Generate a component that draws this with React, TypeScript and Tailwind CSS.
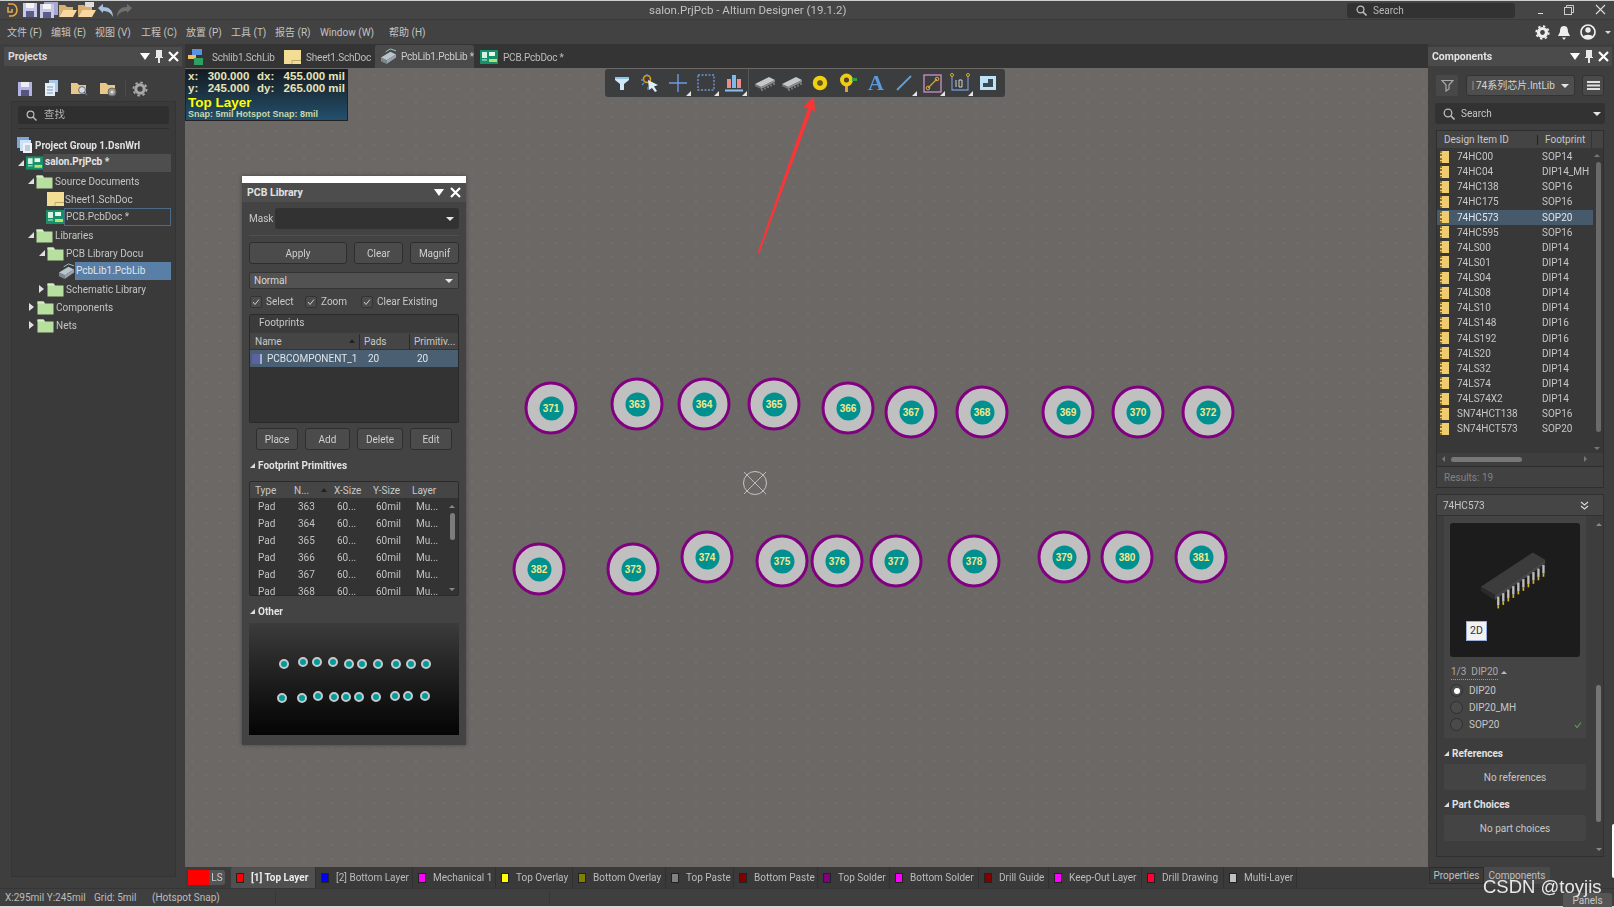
import React from "react";

const Folder = () => (
  <svg width="17" height="16" viewBox="0 0 17 16" className="shrink-0">
    <path d="M0.5 2.5 h6 l1.5 2 h8.5 v11 h-16z" fill="#b7e0a0" />
    <path d="M0.5 2.5 h6 l1.5 2 h-7.5z" fill="#d6f0c4" />
  </svg>
);
const YDoc = ({ w = 17 }: { w?: number }) => (
  <svg width={w} height="14" viewBox="0 0 17 14" className="shrink-0">
    <rect width="17" height="14" fill="#f3dc94" />
    <path d="M8 10.5h9M8 10.5v3.5" stroke="#b9a86e" strokeWidth="1" fill="none" />
  </svg>
);
const Pcb = ({ w = 18 }: { w?: number }) => (
  <svg width={w} height="14" viewBox="0 0 18 14" className="shrink-0">
    <rect width="18" height="14" fill="#14906a" />
    <rect x="2" y="2" width="5" height="6" fill="#d8f0e0" />
    <rect x="9" y="2" width="6" height="4" fill="#e8f6ee" />
    <rect x="9" y="9" width="8" height="3" fill="#b8e070" />
    <path d="M2 10h5" stroke="#d8f0e0" />
  </svg>
);
const LibIc = ({ s = 18 }: { s?: number }) => (
  <svg width={s} height={s} viewBox="0 0 18 18" className="shrink-0">
    <path d="M1 10 L11 4 L17 7 L7 13z" fill="#b9c4cc" />
    <path d="M1 10 L7 13 v4 L1 14z" fill="#7b8790" />
    <path d="M7 13 L17 7 v3 L7 17z" fill="#98a3ab" />
    <path d="M6 4 L11 1 L17 3" stroke="#9cc" fill="none" />
  </svg>
);
const Tri = ({ open }: { open?: boolean }) =>
  open ? (
    <svg width="6" height="6" viewBox="0 0 6 6" className="shrink-0">
      <path d="M6 0 V6 H0z" fill="#e0e0e0" />
    </svg>
  ) : (
    <svg width="5" height="8" viewBox="0 0 5 8" className="shrink-0">
      <path d="M0 0 L5 4 L0 8z" fill="#e0e0e0" />
    </svg>
  );
const Chip = () => (
  <svg width="22" height="18" viewBox="0 0 22 18">
    <path d="M1 10 L15 3 L21 6 L7 13z" fill="#c5c7c8" />
    <path d="M1 10 L7 13 v2 L1 12z" fill="#777" />
    <path d="M7 13 L21 6 v2 L7 15z" fill="#8d8f90" />
    <path d="M8 15v2M11 13.5v2M14 12v2M17 10.5v2M20 9v2" stroke="#999" strokeWidth="1.2" />
  </svg>
);
const Corner = () => (
  <span className="absolute right-[1px] bottom-[1px] w-0 h-0 border-l-[5px] border-l-transparent border-b-[5px] border-b-[#e4e4e4]" />
);

const toolIcons: React.ReactNode[] = [
  <svg width="18" height="18" viewBox="0 0 18 18"><path d="M2 3 H16 V6 L11 10 V16 H7 V10 L2 6z" fill="#cfe8f6" /><path d="M2 3H16V5H2z" fill="#8fc4e4" /></svg>,
  <svg width="20" height="20" viewBox="0 0 20 20"><circle cx="7" cy="6" r="3.5" fill="none" stroke="#e0a020" strokeWidth="1.6" /><path d="M1 7h3M7 1v2M2 12l2-2M8 14v3" stroke="#5a90d0" strokeWidth="1.3" /><path d="M8 7 L18 12 L14 13.5 L17 18 L15 19 L12 15 L9 17z" fill="#dceefa" /></svg>,
  <svg width="20" height="20" viewBox="0 0 20 20"><path d="M10 1V19M1 10H19" stroke="#6f9ae0" strokeWidth="1.4" /></svg>,
  <svg width="20" height="20" viewBox="0 0 20 20"><rect x="2" y="2" width="16" height="15" fill="none" stroke="#6f94d8" strokeWidth="1.4" strokeDasharray="2 1.5" /></svg>,
  <svg width="20" height="20" viewBox="0 0 20 20"><rect x="3" y="6" width="4" height="9" fill="#e88c8c" /><rect x="8" y="2" width="4" height="13" fill="#80b8e8" /><rect x="13" y="6" width="4" height="9" fill="#e88c8c" /><path d="M1 17.5H19" stroke="#8cc0ee" strokeWidth="2" /></svg>,
  <Chip />,
  <Chip />,
  <svg width="16" height="16" viewBox="0 0 16 16"><circle cx="8" cy="8" r="5" fill="none" stroke="#f0d010" strokeWidth="4.5" /><circle cx="8" cy="8" r="2.2" fill="#6a5a20" /></svg>,
  <svg width="20" height="20" viewBox="0 0 20 20"><rect x="7" y="11" width="3" height="8" fill="#e09a40" /><circle cx="8.5" cy="7" r="4.5" fill="none" stroke="#f0cc10" strokeWidth="4" /><circle cx="8.5" cy="7" r="1.5" fill="#5a4a20" /><rect x="14" y="5" width="5" height="3" fill="#30a040" /></svg>,
  <span className="font-['Liberation_Serif',serif] font-bold text-[22px] leading-none text-[#5b9bdc]">A</span>,
  <svg width="18" height="18" viewBox="0 0 18 18"><path d="M2 16 L16 2" stroke="#5f9fe0" strokeWidth="1.8" /></svg>,
  <svg width="19" height="19" viewBox="0 0 19 19"><rect x="1" y="1" width="17" height="17" fill="none" stroke="#d090c8" strokeWidth="1.3" /><path d="M5 14 L14 5" stroke="#d8a030" strokeWidth="1.2" /><circle cx="5" cy="14" r="1.8" fill="none" stroke="#e0a830" /><circle cx="14" cy="5" r="1.8" fill="none" stroke="#e0a830" /></svg>,
  <svg width="20" height="20" viewBox="0 0 20 20"><path d="M2 3V17H18V3" fill="none" stroke="#6c90c8" strokeWidth="1.3" /><circle cx="2" cy="2" r="1.5" fill="none" stroke="#e0a830" /><circle cx="18" cy="2" r="1.5" fill="none" stroke="#e0a830" /><path d="M6 7V14M9 7h3v7h-3z" stroke="#d0d4d8" fill="none" /></svg>,
  <svg width="18" height="18" viewBox="0 0 18 18"><rect x="1" y="2" width="16" height="14" fill="#bfe2f6" /><path d="M4 13 V9 H9 V5 H14 V13z" fill="#3a4a58" /></svg>,
];

const titleIcons: React.ReactNode[] = [
  <svg width="16" height="16" viewBox="0 0 16 16"><path d="M5 2 H9 A5 6 0 0 1 9 14 H6 M5 5 V10 H9 V7" fill="none" stroke="#e0a848" strokeWidth="1.6" /></svg>,
  <svg width="16" height="16" viewBox="0 0 16 16"><rect x="1" y="1" width="14" height="14" fill="#c8c8e8" /><rect x="4" y="1" width="8" height="5" fill="#f4f4f4" /><rect x="4" y="9" width="8" height="6" fill="#5c5c88" /></svg>,
  <svg width="18" height="16" viewBox="0 0 18 16"><rect x="4" y="0" width="14" height="13" fill="#a8a8d0" /><rect x="0" y="2" width="14" height="14" fill="#c8c8e8" /><rect x="3" y="2" width="8" height="5" fill="#f4f4f4" /><rect x="3" y="10" width="8" height="6" fill="#5c5c88" /></svg>,
  <svg width="18" height="16" viewBox="0 0 18 16"><path d="M0 3h6l2 2h6v3H4L0 15z" fill="#d8b070" /><path d="M4 8H18L14 15H0z" fill="#f8d8a0" /></svg>,
  <svg width="18" height="16" viewBox="0 0 18 16"><rect x="7" y="0" width="9" height="5" fill="#ddd" /><path d="M0 3h6l2 2h6v3H4L0 15z" fill="#d8b070" /><path d="M4 8H18L14 15H0z" fill="#f8d8a0" /></svg>,
  <svg width="17" height="15" viewBox="0 0 17 15"><path d="M1 5 L6 1 V4 C12 4 16 7 16 14 C14 10 11 8 6 8 V10z" fill="#a8c0e0" /></svg>,
  <svg width="17" height="15" viewBox="0 0 17 15"><path d="M16 5 L11 1 V4 C5 4 1 7 1 14 C3 10 6 8 11 8 V10z" fill="#707070" /></svg>,
];

const pads: [number, number, number][] = [
  [371, 551, 408], [363, 637, 404], [364, 704, 404], [365, 774, 404], [366, 848, 408], [367, 911, 412], [368, 982, 412],
  [369, 1068, 412], [370, 1138, 412], [372, 1208, 412], [382, 539, 569], [373, 633, 569], [374, 707, 557], [375, 782, 561],
  [376, 837, 561], [377, 896, 561], [378, 974, 561], [379, 1064, 557], [380, 1127, 557], [381, 1201, 557],
];

const previewDots: [number, number][] = [
  [163, 641], [220, 637], [262, 637], [308, 637], [357, 641], [397, 643], [443, 642], [498, 642], [543, 642], [589, 642],
  [156, 745], [217, 745], [265, 737], [313, 740], [348, 740], [387, 740], [437, 740], [494, 737], [535, 737], [584, 737],
];

const layers: [string, string, string, string?][] = [
  ["[1] Top Layer", "#ff0000", "w-[85px]", "active"],
  ["[2] Bottom Layer", "#0000ff", "w-[97px]"],
  ["Mechanical 1", "#ff00ff", "w-[83px]"],
  ["Top Overlay", "#ffff00", "w-[77px]"],
  ["Bottom Overlay", "#808000", "w-[93px]"],
  ["Top Paste", "#808080", "w-[68px]"],
  ["Bottom Paste", "#800000", "w-[84px]"],
  ["Top Solder", "#800080", "w-[72px]"],
  ["Bottom Solder", "#ff00ff", "w-[89px]"],
  ["Drill Guide", "#800000", "w-[70px]"],
  ["Keep-Out Layer", "#ff00ff", "w-[93px]"],
  ["Drill Drawing", "#ff0030", "w-[82px]"],
  ["Multi-Layer", "#c0c0c0", "w-[73px]"],
];

const comps: [string, string][] = [
  ["74HC00", "SOP14"], ["74HC04", "DIP14_MH"], ["74HC138", "SOP16"], ["74HC175", "SOP16"], ["74HC573", "SOP20"], ["74HC595", "SOP16"],
  ["74LS00", "DIP14"], ["74LS01", "DIP14"], ["74LS04", "DIP14"], ["74LS08", "DIP14"], ["74LS10", "DIP14"], ["74LS148", "DIP16"],
  ["74LS192", "DIP16"], ["74LS20", "DIP14"], ["74LS32", "DIP14"], ["74LS74", "DIP14"], ["74LS74X2", "DIP14"], ["SN74HCT138", "SOP16"],
  ["SN74HCT573", "SOP20"],
];

const PanelBtn = ({ children, cls }: { children: React.ReactNode; cls: string }) => (
  <div className={`h-[22px] flex items-center justify-center rounded-[3px] bg-[#4b4b4b] border border-[#2e2e2e] text-[#cfcfcf] overflow-hidden ${cls}`}>{children}</div>
);
const Caret = () => <span className="w-0 h-0 shrink-0 border-l-[4px] border-r-[4px] border-t-[4px] border-l-transparent border-r-transparent border-t-[#e6e6e6]" />;
const Check = () => (
  <span className="w-[12px] h-[12px] rounded-[2px] bg-[#4b4b4b] border border-[#333] flex items-center justify-center shrink-0">
    <svg width="8" height="8" viewBox="0 0 8 8"><path d="M1 4 L3 6.5 L7 1.5" fill="none" stroke="#d0d0d0" strokeWidth="1" /></svg>
  </span>
);
const PanelHead = () => (
  <div className="flex items-center gap-[3px]">
    <span className="w-0 h-0 border-l-[5px] border-r-[5px] border-t-[7px] border-l-transparent border-r-transparent border-t-white" />
    <svg width="12" height="13" viewBox="0 0 12 13"><path d="M3 0h6v7h1v1H7v5H5V8H2V7h1z" fill="#e8e8e8" /></svg>
    <svg width="11" height="11" viewBox="0 0 11 11"><path d="M1 1 L10 10 M10 1 L1 10" stroke="#fff" strokeWidth="2.2" /></svg>
  </div>
);
const Heading = ({ children, cls }: { children: React.ReactNode; cls: string }) => (
  <div className={`flex items-center gap-[3px] font-bold text-[#e2e2e2] text-[10px] ${cls}`}>
    <svg width="5" height="5" viewBox="0 0 5 5"><path d="M5 0V5H0z" fill="#ddd" /></svg>
    {children}
  </div>
);

const Tree = () => (
  <div className="mt-[7px] text-[10px] text-[#c4c4c4] relative">
    <div className="h-[18px] flex items-center pl-[7px] gap-[1px]">
      <svg width="18" height="18" viewBox="0 0 18 18" className="shrink-0"><rect x="1" y="1" width="12" height="11" fill="#7aa6e0" /><rect x="4" y="4" width="11" height="11" fill="#cfe0f2" /><rect x="7" y="7" width="9" height="10" fill="#f0f4f8" /><path d="M9 10h5M9 12h5M9 14h5" stroke="#8fa8c0" /></svg>
      <span className="font-bold text-[#e0e0e0]">Project Group 1.DsnWrl</span>
    </div>
    <div className="h-[18px] flex items-center pl-[9px] relative">
      <Tri open />
      <span className="ml-[2px]"><Pcb w={17} /></span>
      <span className="font-bold text-[#e4e4e4] bg-[#4e4e4e] h-[18px] leading-[16px] w-[128px] pl-[2px]">salon.PrjPcb *</span>
    </div>
    <div className="h-[18px] flex items-center pl-[19px] gap-[1px]"><span className="mr-[1px]"><Tri open /></span><Folder /><span className="ml-[1px]">Source Documents</span></div>
    <div className="h-[18px] flex items-center pl-[38px]"><YDoc /><span className="ml-[1px]">Sheet1.SchDoc</span></div>
    <div className="h-[18px] flex items-center pl-[37px]"><Pcb /><span className="border border-[#4a6a88] h-[18px] w-[107px] pl-[1px] leading-[15px]">PCB.PcbDoc *</span></div>
    <div className="h-[18px] flex items-center pl-[19px] gap-[1px]"><span className="mr-[1px]"><Tri open /></span><Folder /><span className="ml-[1px]">Libraries</span></div>
    <div className="h-[18px] flex items-center pl-[30px] gap-[1px]"><span className="mr-[1px]"><Tri open /></span><Folder /><span className="ml-[1px]">PCB Library Docu</span></div>
    <div className="h-[18px] flex items-center pl-[49px]"><LibIc s={17} /><span className="bg-[#5a7fa6] h-[18px] w-[96px] pl-[1px] leading-[17px] text-[#dfe6ee]">PcbLib1.PcbLib</span></div>
    <div className="h-[18px] flex items-center pl-[30px] gap-[1px]"><span className="mr-[2px]"><Tri /></span><Folder /><span className="ml-[1px]">Schematic Library</span></div>
    <div className="h-[18px] flex items-center pl-[20px] gap-[1px]"><span className="mr-[2px]"><Tri /></span><Folder /><span className="ml-[1px]">Components</span></div>
    <div className="h-[18px] flex items-center pl-[20px] gap-[1px]"><span className="mr-[2px]"><Tri /></span><Folder /><span className="ml-[1px]">Nets</span></div>
  </div>
);

const LibraryPanel = () => (
  <div className="absolute left-[57px] top-[108px] w-[224px] h-[569px] bg-[#434343] flex flex-col text-[10px] text-[#c8c8c8] shadow-[0_0_4px_rgba(0,0,0,0.35)]">
    <div className="h-[7px] bg-white shrink-0" />
    <div className="h-[19px] bg-[#4d4d4d] flex items-center justify-between pl-[5px] pr-[5px] shrink-0">
      <span className="font-bold text-[#e0e0e0] text-[10.5px]">PCB Library</span>
      <div className="flex items-center gap-[6px]">
        <span className="w-0 h-0 border-l-[5px] border-r-[5px] border-t-[7px] border-l-transparent border-r-transparent border-t-white" />
        <svg width="11" height="11" viewBox="0 0 11 11"><path d="M1 1 L10 10 M10 1 L1 10" stroke="#fff" strokeWidth="2.2" /></svg>
      </div>
    </div>
    <div className="mt-[6px] px-[7px] flex items-center h-[21px]">
      <span className="w-[26px] shrink-0">Mask</span>
      <div className="flex-1 h-[21px] rounded-[3px] bg-[#323232] flex items-center justify-end pr-[5px]"><Caret /></div>
    </div>
    <div className="mx-[7px] mt-[6px] h-px bg-[#4f4f4f]" />
    <div className="mt-[6px] px-[7px] flex gap-[7px]">
      <PanelBtn cls="w-[98px]">Apply</PanelBtn>
      <PanelBtn cls="w-[49px]">Clear</PanelBtn>
      <PanelBtn cls="w-[49px]">Magnif</PanelBtn>
    </div>
    <div className="mt-[8px] mx-[7px] h-[17px] bg-[#525252] rounded-[2px] border border-[#333] flex items-center justify-between pl-[4px] pr-[5px] text-[#d6d6d6]">
      <span>Normal</span><Caret />
    </div>
    <div className="mt-[5px] px-[8px] h-[15px] flex items-center">
      <Check /><span className="ml-[4px] w-[39px]">Select</span>
      <Check /><span className="ml-[4px] w-[40px]">Zoom</span>
      <Check /><span className="ml-[4px]">Clear Existing</span>
    </div>
    <div className="mt-[5px] mx-[7px] h-[109px] bg-[#333333] border border-[#2a2a2a] rounded-[2px] flex flex-col shrink-0">
      <div className="h-[18px] bg-[#3b3b3b] pl-[9px] pb-[3px] flex items-center">Footprints</div>
      <div className="h-[16px] bg-[#454545] flex items-center relative">
        <span className="pl-[5px] w-[110px] border-r border-[#2a2a2a]">Name</span>
        <span className="w-[50px] pl-[4px] border-r border-[#2a2a2a]">Pads</span>
        <span className="pl-[4px]">Primitiv...</span>
        <span className="absolute left-[99px] top-[6px] w-0 h-0 border-l-[3px] border-r-[3px] border-b-[4px] border-l-transparent border-r-transparent border-b-[#222]" />
      </div>
      <div className="mt-[1px] h-[17px] bg-[#4a6072] flex items-center text-[#dfe4e8]">
        <span className="ml-[2px] w-[10px] h-[10px] bg-[#5a62a0] border-r-2 border-[#9fb0d0] shrink-0" />
        <span className="ml-[5px] w-[101px] whitespace-nowrap">PCBCOMPONENT_1</span>
        <span className="w-[49px]">20</span><span>20</span>
      </div>
    </div>
    <div className="mt-[5px] px-[14px] flex gap-[7px]">
      <PanelBtn cls="w-[42px]">Place</PanelBtn>
      <PanelBtn cls="w-[45px]">Add</PanelBtn>
      <PanelBtn cls="w-[46px]">Delete</PanelBtn>
      <PanelBtn cls="w-[42px]">Edit</PanelBtn>
    </div>
    <Heading cls="mt-[7px] h-[16px] pl-[8px]">Footprint Primitives</Heading>
    <div className="mt-[8px] mx-[7px] h-[115px] bg-[#333333] border border-[#2a2a2a] rounded-[2px] relative overflow-hidden shrink-0">
      <div className="h-[16px] bg-[#454545] flex items-center relative">
        <span className="pl-[5px] w-[44px]">Type</span><span className="w-[40px]">N...</span><span className="w-[39px]">X-Size</span><span className="w-[39px]">Y-Size</span><span>Layer</span>
        <span className="absolute left-[71px] top-[6px] w-0 h-0 border-l-[3px] border-r-[3px] border-b-[4px] border-l-transparent border-r-transparent border-b-[#222]" />
      </div>
      {[363, 364, 365, 366, 367, 368].map((n) => (
        <div key={n} className="h-[17px] flex items-center text-[#c2c2c2]">
          <span className="pl-[8px] w-[48px]">Pad</span><span className="w-[39px]">{n}</span><span className="w-[39px]">60...</span><span className="w-[40px]">60mil</span><span>Mu...</span>
        </div>
      ))}
      <div className="absolute right-[3px] top-[31px] w-[5px] h-[27px] rounded-[3px] bg-[#7c7c7c]" />
      <span className="absolute right-[3px] top-[23px] w-0 h-0 border-l-[3px] border-r-[3px] border-b-[3px] border-l-transparent border-r-transparent border-b-[#888]" />
      <span className="absolute right-[3px] top-[106px] w-0 h-0 border-l-[3px] border-r-[3px] border-t-[3px] border-l-transparent border-r-transparent border-t-[#888]" />
    </div>
    <Heading cls="mt-[7px] h-[16px] pl-[8px]">Other</Heading>
    <div className="mt-[4px] mx-[7px] h-[112px] bg-gradient-to-b from-[#3c3c3c] to-[#050505] relative shrink-0">
      {previewDots.map(([x, y], i) => (
        <span
          key={i}
          className="absolute w-[10px] h-[10px] rounded-full bg-[#009c9c] border-[2px] border-[#c8c8c8] -translate-x-1/2 -translate-y-1/2"
          style={{ left: 230 + x / 3 - 249, top: 450 + y / 3 - 623 }}
        />
      ))}
    </div>
  </div>
);

const Canvas = () => (
  <div className="flex-1 relative bg-[#6c6866] bg-[radial-gradient(circle,#726e6c_0.7px,transparent_0.9px)] bg-[length:14px_14px]">
    <div className="absolute left-0 top-[1px] w-[163px] h-[52px] bg-gradient-to-b from-[#141c22] to-[#23506e] border border-[#222] text-[#e8e4b8] font-bold px-[2px] font-['Liberation_Sans',sans-serif] whitespace-nowrap">
      <div className="text-[11.5px] leading-[12px] flex"><span className="w-[20px]">x:</span><span className="w-[50px]">300.000</span><span className="w-[27px]">dx:</span><span>455.000 mil</span></div>
      <div className="text-[11.5px] leading-[13px] flex"><span className="w-[20px]">y:</span><span className="w-[50px]">245.000</span><span className="w-[27px]">dy:</span><span>265.000 mil</span></div>
      <div className="text-[13.5px] leading-[15px] text-[#ffff00]">Top Layer</div>
      <div className="text-[9px] leading-[9px] text-[#c8d8a8]">Snap: 5mil Hotspot Snap: 8mil</div>
    </div>

    {pads.map(([n, x, y]) => (
      <div
        key={n}
        className="absolute w-[53px] h-[53px] rounded-full bg-[#c0c0c0] border-[3px] border-[#800080] flex items-center justify-center -translate-x-1/2 -translate-y-1/2"
        style={{ left: x - 185, top: y - 68 }}
      >
        <div className="w-[24px] h-[24px] rounded-full bg-[#009090] flex items-center justify-center text-[#f4e88a] font-bold text-[10px] font-['Liberation_Sans',sans-serif]">{n}</div>
      </div>
    ))}

    <svg className="absolute left-[556px] top-[401px]" width="28" height="28" viewBox="0 0 28 28">
      <circle cx="14" cy="14" r="11.5" fill="none" stroke="#c4c4c4" strokeWidth="1" />
      <path d="M3 3 L25 25 M25 3 L3 25" stroke="#c4c4c4" strokeWidth="0.9" />
    </svg>

    <div className="absolute left-[420px] top-[1px] w-[400px] h-[28px] rounded-[3px] bg-[#3b3d3f] flex items-center pl-[3px]">
      {toolIcons.map((ic, i) => (
        <div key={i} className={`relative h-[28px] flex items-center justify-center shrink-0 ${i === 5 ? "w-[30px] pl-[2px] border-l border-[#565656]" : "w-[28px]"}`}>
          {ic}
          {[2, 3, 4, 10, 11, 12].includes(i) && <Corner />}
        </div>
      ))}
    </div>

    <svg className="absolute left-[565px] top-[25px]" width="70" height="165" viewBox="0 0 70 165">
      <path d="M7.5 160 L9.5 160 L62 16 L65 19 L64 4 L53 14 L58 15 z" fill="#fb3535" />
    </svg>

    <LibraryPanel />
  </div>
);

const Bars = () => (
  <svg width="13" height="9" viewBox="0 0 13 9"><path d="M0 1h13M0 4.5h13M0 8h13" stroke="#e0e0e0" strokeWidth="1.8" /></svg>
);

const RightPanel = () => (
  <div className="w-[186px] shrink-0 pt-[3px] pr-[2px] flex flex-col text-[10px] text-[#c6c6c6] bg-[#3e3e3e]">
    <div className="h-[19px] bg-[#4b4b4b] flex items-center justify-between pl-[4px] pr-[3px] shrink-0">
      <span className="font-bold text-[#e2e2e2] text-[10.5px]">Components</span>
      <PanelHead />
    </div>
    <div className="mt-[9px] flex h-[21px] shrink-0 pl-[8px]">
      <div className="w-[22px] h-[21px] rounded-[2px] bg-[#484848] flex items-center justify-center">
        <svg width="13" height="13" viewBox="0 0 13 13"><path d="M1 1.5H12L8 6V10L5 12V6z" fill="none" stroke="#a8a8a8" strokeWidth="1.2" /></svg>
      </div>
      <div className="ml-[8px] w-[109px] h-[21px] rounded-[3px] bg-[#4e4e4e] border border-[#333] flex items-center justify-between pl-[5px] pr-[5px] text-[#d4d4d4]">
        <span className="w-[2px] h-[9px] bg-[#6e6e6e] shrink-0" />
        <span className="ml-[2px] flex-1 whitespace-nowrap">74系列芯片.IntLib</span><Caret />
      </div>
      <div className="ml-[7px] w-[22px] h-[21px] rounded-[3px] bg-[#4a4a4a] border border-[#333] flex items-center justify-center"><Bars /></div>
    </div>
    <div className="mt-[7px] ml-[7px] w-[170px] h-[21px] rounded-[3px] bg-[#323232] flex items-center pl-[8px] pr-[4px] shrink-0">
      <svg width="12" height="12" viewBox="0 0 12 12"><circle cx="5" cy="5" r="3.8" fill="none" stroke="#bbb" strokeWidth="1.3" /><path d="M8 8l3.5 3.5" stroke="#bbb" strokeWidth="1.6" /></svg>
      <span className="ml-[6px] flex-1">Search</span><Caret />
    </div>
    <div className="mt-[6px] ml-[8px] w-[168px] h-[358px] bg-[#383838] border border-[#2e2e2e] flex flex-col relative shrink-0">
      <div className="h-[17px] bg-[#444] flex items-center shrink-0 relative">
        <span className="pl-[7px] w-[100px]">Design Item ID</span>
        <span className="border-l border-[#222] h-[10px]" />
        <span className="pl-[7px]">Footprint</span>
        <span className="absolute right-[11px] top-0 h-full border-l border-[#333]" />
      </div>
      <div className="h-[305px] overflow-hidden shrink-0 pt-[1px]">
        {comps.map(([a, b], i) => (
          <div key={a} className={`h-[15.13px] w-[156px] flex items-center ${i === 4 ? "bg-[#465a6c] text-[#dfe5ea]" : ""}`}>
            <span className="ml-[3px] w-[9px] h-[12px] bg-[#f0cc70] border-l-[2px] border-dotted border-[#8a7030] shrink-0" />
            <span className="ml-[8px] w-[85px] whitespace-nowrap">{a}</span>
            <span className="whitespace-nowrap">{b}</span>
          </div>
        ))}
      </div>
      <div className="absolute right-[2px] top-[31px] w-[5px] h-[270px] rounded-[3px] bg-[#6a6a6a]" />
      <span className="absolute right-[3px] top-[23px] w-0 h-0 border-l-[3px] border-r-[3px] border-b-[3px] border-l-transparent border-r-transparent border-b-[#777]" />
      <span className="absolute right-[3px] top-[316px] w-0 h-0 border-l-[3px] border-r-[3px] border-t-[3px] border-l-transparent border-r-transparent border-t-[#777]" />
      <div className="h-[13px] bg-[#3e3e3e] relative shrink-0">
        <div className="absolute left-[14px] top-[4px] w-[71px] h-[5px] rounded-[3px] bg-[#777]" />
        <span className="absolute left-[5px] top-[3px] w-0 h-0 border-t-[3px] border-b-[3px] border-r-[3px] border-t-transparent border-b-transparent border-r-[#777]" />
        <span className="absolute right-[16px] top-[3px] w-0 h-0 border-t-[3px] border-b-[3px] border-l-[3px] border-t-transparent border-b-transparent border-l-[#777]" />
      </div>
      <div className="flex-1 border-t border-[#2e2e2e] bg-[#414141] pl-[7px] flex items-center text-[#828282]">Results: 19</div>
    </div>
    <div className="mt-[6px] ml-[8px] w-[168px] h-[22px] bg-[#454545] border border-[#303030] flex items-center justify-between pl-[6px] pr-[14px] shrink-0">
      <span>74HC573</span>
      <svg width="9" height="9" viewBox="0 0 9 9"><path d="M1 1L4.5 4L8 1M1 5L4.5 8L8 5" fill="none" stroke="#d8d8d8" strokeWidth="1.2" /></svg>
    </div>
    <div className="ml-[8px] w-[168px] h-[341px] border border-t-0 border-[#303030] bg-[#3d3d3d] relative shrink-0">
      <div className="ml-[7px] w-[142px] h-[222px] bg-[#444] pt-[7px] pl-[6px]">
        <div className="w-[130px] h-[134px] rounded-[3px] bg-[#1c1c1c] relative">
          <svg width="130" height="134" viewBox="88 130 388 400" className="absolute left-0 top-0">
            <path d="M180 320 L335 218 L372 240 L222 345z" fill="#3c3c3c" />
            <path d="M180 320 L222 345 L222 360 L180 333z" fill="#2a2a2a" />
            <path d="M222 345 L372 240 L372 252 L222 360z" fill="#444" />
            {[0, 1, 2, 3, 4, 5, 6, 7, 8, 9].map((i) => (
              <g key={i}>
                <path d={`M${232 + i * 15} ${350 - i * 10.5} v25`} stroke="#bdbdbd" strokeWidth="7" />
                <path d={`M${232 + i * 15} ${375 - i * 10.5} v10`} stroke="#d8b820" strokeWidth="5" />
              </g>
            ))}
          </svg>
          <div className="absolute left-[16px] top-[98px] w-[21px] h-[20px] bg-[#f2f2f2] border border-[#9ab0d8] text-[#333] flex items-center justify-center text-[10.5px]">2D</div>
        </div>
        <div className="mt-[7px] text-[#aaa] flex items-center gap-[3px] h-[16px] ml-[1px]"><span className="border-b border-dotted border-[#999] leading-[14px]">1/3&nbsp;&nbsp;DIP20</span><span className="w-0 h-0 border-l-[3px] border-r-[3px] border-b-[3px] border-l-transparent border-r-transparent border-b-[#bbb]" /></div>
        <div className="mt-[2px] flex flex-col">
          {["DIP20", "DIP20_MH", "SOP20"].map((t, i) => (
            <div key={t} className="h-[17px] flex items-center">
              <span className="w-[13px] h-[13px] rounded-full bg-[#4a4a4a] border border-[#303030] flex items-center justify-center shrink-0">{i === 0 && <span className="w-[6px] h-[6px] rounded-full bg-white" />}</span>
              <span className="ml-[6px] flex-1">{t}</span>
              {i === 2 && <svg width="8" height="8" viewBox="0 0 8 8" className="mr-[4px]"><path d="M1 4L3 6.5L7 1.5" fill="none" stroke="#5aa050" strokeWidth="1.1" /></svg>}
            </div>
          ))}
        </div>
      </div>
      <Heading cls="mt-[7px] ml-[7px] h-[16px]">References</Heading>
      <div className="mt-[3px] ml-[7px] w-[142px] h-[26px] bg-[#444] rounded-[2px] flex items-center justify-center">No references</div>
      <Heading cls="mt-[6px] ml-[7px] h-[16px]">Part Choices</Heading>
      <div className="mt-[3px] ml-[7px] w-[142px] h-[26px] bg-[#444] rounded-[2px] flex items-center justify-center">No part choices</div>
      <div className="absolute left-[159px] top-[169px] w-[5px] h-[137px] rounded-[3px] bg-[#757575]" />
      <span className="absolute left-[159px] top-[7px] w-0 h-0 border-l-[3px] border-r-[3px] border-b-[3px] border-l-transparent border-r-transparent border-b-[#888]" />
      <span className="absolute left-[159px] top-[332px] w-0 h-0 border-l-[3px] border-r-[3px] border-t-[3px] border-l-transparent border-r-transparent border-t-[#888]" />
    </div>
    <div className="mt-[10px] flex h-[17px] pl-[1px] shrink-0">
      <div className="w-[55px] bg-[#3a3a3a] border border-[#2c2c2c] flex items-center justify-center text-[#c0c0c0]">Properties</div>
      <div className="w-[66px] bg-[#4a4a4a] flex items-center justify-center text-[#c0c0c0]">Components</div>
    </div>
  </div>
);

export default function App() {
  return (
    <div className="relative w-[1614px] h-[908px] overflow-hidden bg-[#d8d8d8] font-[Roboto,'Noto_Sans_CJK_SC',sans-serif]">
      <div className="w-full h-[906px] flex flex-col blur-[0.35px]">
        <div className="h-[19px] bg-[#454545] border-t border-[#cfcfcf] flex items-center relative shrink-0">
          <div className="flex items-center pl-[1px]">
            {titleIcons.map((ic, i) => (
              <div key={i} className="w-[19px] flex justify-center shrink-0">{ic}</div>
            ))}
          </div>
          <span className="absolute left-[649px] top-[1px] text-[11.5px] leading-[16px] text-[#c0c0c0]">salon.PrjPcb - Altium Designer (19.1.2)</span>
          <div className="ml-auto mr-[99px] w-[168px] h-[15px] rounded-[3px] bg-[#323232] flex items-center pl-[9px]">
            <svg width="11" height="11" viewBox="0 0 11 11"><circle cx="4.5" cy="4.5" r="3.4" fill="none" stroke="#bbb" strokeWidth="1.3" /><path d="M7 7l3.5 3.5" stroke="#bbb" strokeWidth="1.6" /></svg>
            <span className="ml-[6px] text-[10px] text-[#b8b8b8]">Search</span>
          </div>
          <div className="absolute right-[8px] top-[3px] flex items-center gap-[21px]">
            <span className="w-[5px] h-[1.5px] bg-[#ddd] mt-[8px]" />
            <svg width="10" height="10" viewBox="0 0 10 10"><rect x="0.5" y="2.5" width="7" height="7" fill="none" stroke="#ccc" /><path d="M2.5 2.5V0.5H9.5V7.5H7.5" fill="none" stroke="#ccc" /></svg>
            <svg width="11" height="11" viewBox="0 0 11 11"><path d="M1 1L10 10M10 1L1 10" stroke="#ddd" strokeWidth="1.1" /></svg>
          </div>
        </div>

        <div className="h-[25px] bg-[#424242] border-t border-[#3a3a3a] flex items-center relative shrink-0 text-[10px] text-[#c4c4c4]">
          {[
            ["文件 (F)", "w-[44px]"], ["编辑 (E)", "w-[44px]"], ["视图 (V)", "w-[46px]"], ["工程 (C)", "w-[45px]"], ["放置 (P)", "w-[45px]"],
            ["工具 (T)", "w-[44px]"], ["报告 (R)", "w-[45px]"], ["Window (W)", "w-[69px]"], ["帮助 (H)", "w-[45px]"],
          ].map(([t, w], i) => (
            <span key={t} className={`${w} whitespace-nowrap ${i === 0 ? "ml-[7px]" : ""}`}>{t}</span>
          ))}
          <div className="ml-auto mr-[3px] flex items-center">
            <svg width="15" height="15" viewBox="0 0 15 15"><circle cx="7.5" cy="7.5" r="4" fill="none" stroke="#eee" strokeWidth="3.2" /><circle cx="7.5" cy="7.5" r="6.3" fill="none" stroke="#eee" strokeWidth="1.7" strokeDasharray="2.4 2.5" /></svg>
            <svg width="14" height="15" viewBox="0 0 14 15" className="ml-[7px]"><path d="M7 1C3.5 1 3 4 3 7 L1 11 H13 L11 7 C11 4 10.5 1 7 1z" fill="#eee" /><path d="M5 12.5h4L7 15z" fill="#eee" /></svg>
            <svg width="16" height="16" viewBox="0 0 16 16" className="ml-[9px]"><circle cx="8" cy="8" r="7" fill="none" stroke="#eee" strokeWidth="1.7" /><circle cx="8" cy="6" r="2.7" fill="#eee" /><path d="M3 13 C4 10 12 10 13 13 L10 15 H6z" fill="#eee" /></svg>
            <span className="ml-[9px] w-0 h-0 border-l-[3px] border-r-[3px] border-t-[3px] border-l-transparent border-r-transparent border-t-[#ddd]" />
          </div>
        </div>

        <div className="flex-1 flex min-h-0">
          <div className="w-[185px] shrink-0 pt-[3px] bg-[#3e3e3e] flex flex-col">
            <div className="ml-[4px] w-[178px] h-[19px] bg-[#4b4b4b] flex items-center justify-between pl-[4px] pr-[3px] shrink-0">
              <span className="font-bold text-[#dcdcdc] text-[10.5px]">Projects</span>
              <PanelHead />
            </div>
            <div className="h-[25px] mt-[10px] flex items-center pl-[17px] shrink-0 relative">
              <svg width="16" height="16" viewBox="0 0 16 16"><rect x="1" y="1" width="14" height="14" fill="#b4b4e4" /><rect x="4" y="1" width="8" height="5" fill="#eee" /><rect x="4" y="9" width="8" height="6" fill="#55557f" /></svg>
              <svg width="16" height="17" viewBox="0 0 16 17" className="ml-[11px]"><rect x="5" y="0" width="9" height="12" fill="#a8c8e8" /><rect x="1" y="3" width="10" height="13" fill="#e4eef8" /><path d="M3 7h6M3 10h6M3 13h6" stroke="#7a9ac0" /></svg>
              <svg width="18" height="16" viewBox="0 0 18 16" className="ml-[11px]"><path d="M0 2h6l2 2h7v9H0z" fill="#e8c888" /><circle cx="11" cy="9" r="3.4" fill="#d0dce8" stroke="#667" /><path d="M13 11l3 3" stroke="#667" strokeWidth="1.5" /></svg>
              <svg width="18" height="16" viewBox="0 0 18 16" className="ml-[11px]"><path d="M0 2h6l2 2h7v9H0z" fill="#e8c888" /><circle cx="12" cy="11" r="4" fill="#999" stroke="#666" /><circle cx="12" cy="11" r="1.5" fill="#ddd" /></svg>
              <span className="ml-[7px] w-px h-[16px] bg-[#4c4c4c]" />
              <svg width="16" height="16" viewBox="0 0 16 16" className="ml-[6px]"><circle cx="8" cy="8" r="4.2" fill="none" stroke="#a8a8a8" strokeWidth="3" /><circle cx="8" cy="8" r="6.6" fill="none" stroke="#a8a8a8" strokeWidth="1.8" strokeDasharray="2.6 2.6" /></svg>
            </div>
            <div className="ml-[11px] w-[165px] flex-1 mb-[11px] bg-[#3a3a3a] border border-[#343434] pt-[4px] px-0 min-h-0">
              <div className="mx-[6px] h-[18px] rounded-[3px] bg-[#2f2f2f] flex items-center pl-[8px] text-[10.5px] text-[#b4b4b4]">
                <svg width="11" height="11" viewBox="0 0 11 11"><circle cx="4.5" cy="4.5" r="3.4" fill="none" stroke="#bbb" strokeWidth="1.2" /><path d="M7 7l3.5 3.5" stroke="#bbb" strokeWidth="1.4" /></svg>
                <span className="ml-[7px]">查找</span>
              </div>
              <div className="mx-[6px] mt-[4px] h-px bg-[#2f2f2f]" />
              <div className="-ml-[3px]"><Tree /></div>
            </div>
          </div>

          <div className="flex-1 flex flex-col min-w-0">
            <div className="h-[24px] bg-[#343434] flex items-end text-[10px] tracking-[-0.2px] text-[#bdbdbd] shrink-0">
              <div className="w-[99px] h-[22px] flex items-center pl-[2px] gap-[7px] whitespace-nowrap">
                <svg width="18" height="18" viewBox="0 0 18 18"><path d="M5 1h10v6H5z" fill="#5a90e0" /><path d="M1 7h8v4H1z" fill="#f0c060" /><path d="M7 10h9v7H7z" fill="#30a060" /></svg>
                Schlib1.SchLib
              </div>
              <div className="w-[91px] h-[22px] flex items-center gap-[5px] whitespace-nowrap"><YDoc /> Sheet1.SchDoc</div>
              <div className="w-[99px] h-[23px] bg-[#4a4a4a] rounded-t-[3px] flex items-center pl-[5px] gap-[4px] whitespace-nowrap text-[#cdcdcd]"><LibIc s={17} /> PcbLib1.PcbLib *</div>
              <div className="ml-[6px] h-[22px] flex items-center gap-[5px] whitespace-nowrap"><Pcb /> PCB.PcbDoc *</div>
            </div>
            <Canvas />
            <div className="h-[21px] bg-[#3c3c3c] flex items-center pl-[3px] shrink-0 text-[10px] text-[#bcbcbc]">
              <span className="w-[21px] h-[15px] bg-[#ff0000]" />
              <span className="w-[16px] h-[15px] bg-[#555] rounded-r-[3px] flex items-center justify-center text-[10px] text-[#ccc]">LS</span>
              <div className="ml-[6px] flex h-[21px]">
                {layers.map(([t, c, w, a]) => (
                  <div key={t} className={`${w} h-[21px] flex items-center pl-[5px] whitespace-nowrap rounded-t-[2px] border-r border-[#303030] ${a ? "bg-[#505050] font-bold text-[#ececec]" : "bg-[#3a3a3a]"}`}>
                    <span className="w-[8px] h-[10px] border border-[#222] shrink-0" style={{ background: c }} />
                    <span className="ml-[7px]">{t}</span>
                  </div>
                ))}
              </div>
            </div>
          </div>

          <RightPanel />
        </div>

        <div className="h-[18px] bg-[#3f3f3f] border-t border-[#363636] flex items-center text-[10px] text-[#bcbcbc] relative shrink-0">
          <span className="ml-[5px] w-[89px]">X:295mil Y:245mil</span>
          <span className="w-[58px]">Grid: 5mil</span>
          <span>(Hotspot Snap)</span>
          <span className="absolute left-[275px] top-[2px] h-[14px] border-l border-[#363636]" />
          <span className="absolute left-[549px] top-[2px] h-[14px] border-l border-[#363636]" />
          <div className="absolute right-[2px] top-[4px] w-[49px] h-[14px] rounded-t-[3px] bg-[#555] flex items-center justify-center text-[#c8c8c8]">Panels</div>
        </div>
      </div>

      <div className="absolute right-0 top-[824px] w-[2px] h-[54px] bg-white rounded-l-[2px]" />
      <div className="absolute left-[1483px] top-[875px] text-[18.5px] leading-[24px] text-[#e8e8e8] font-['Liberation_Sans',sans-serif] whitespace-nowrap">CSDN @toyjis</div>
    </div>
  );
}
